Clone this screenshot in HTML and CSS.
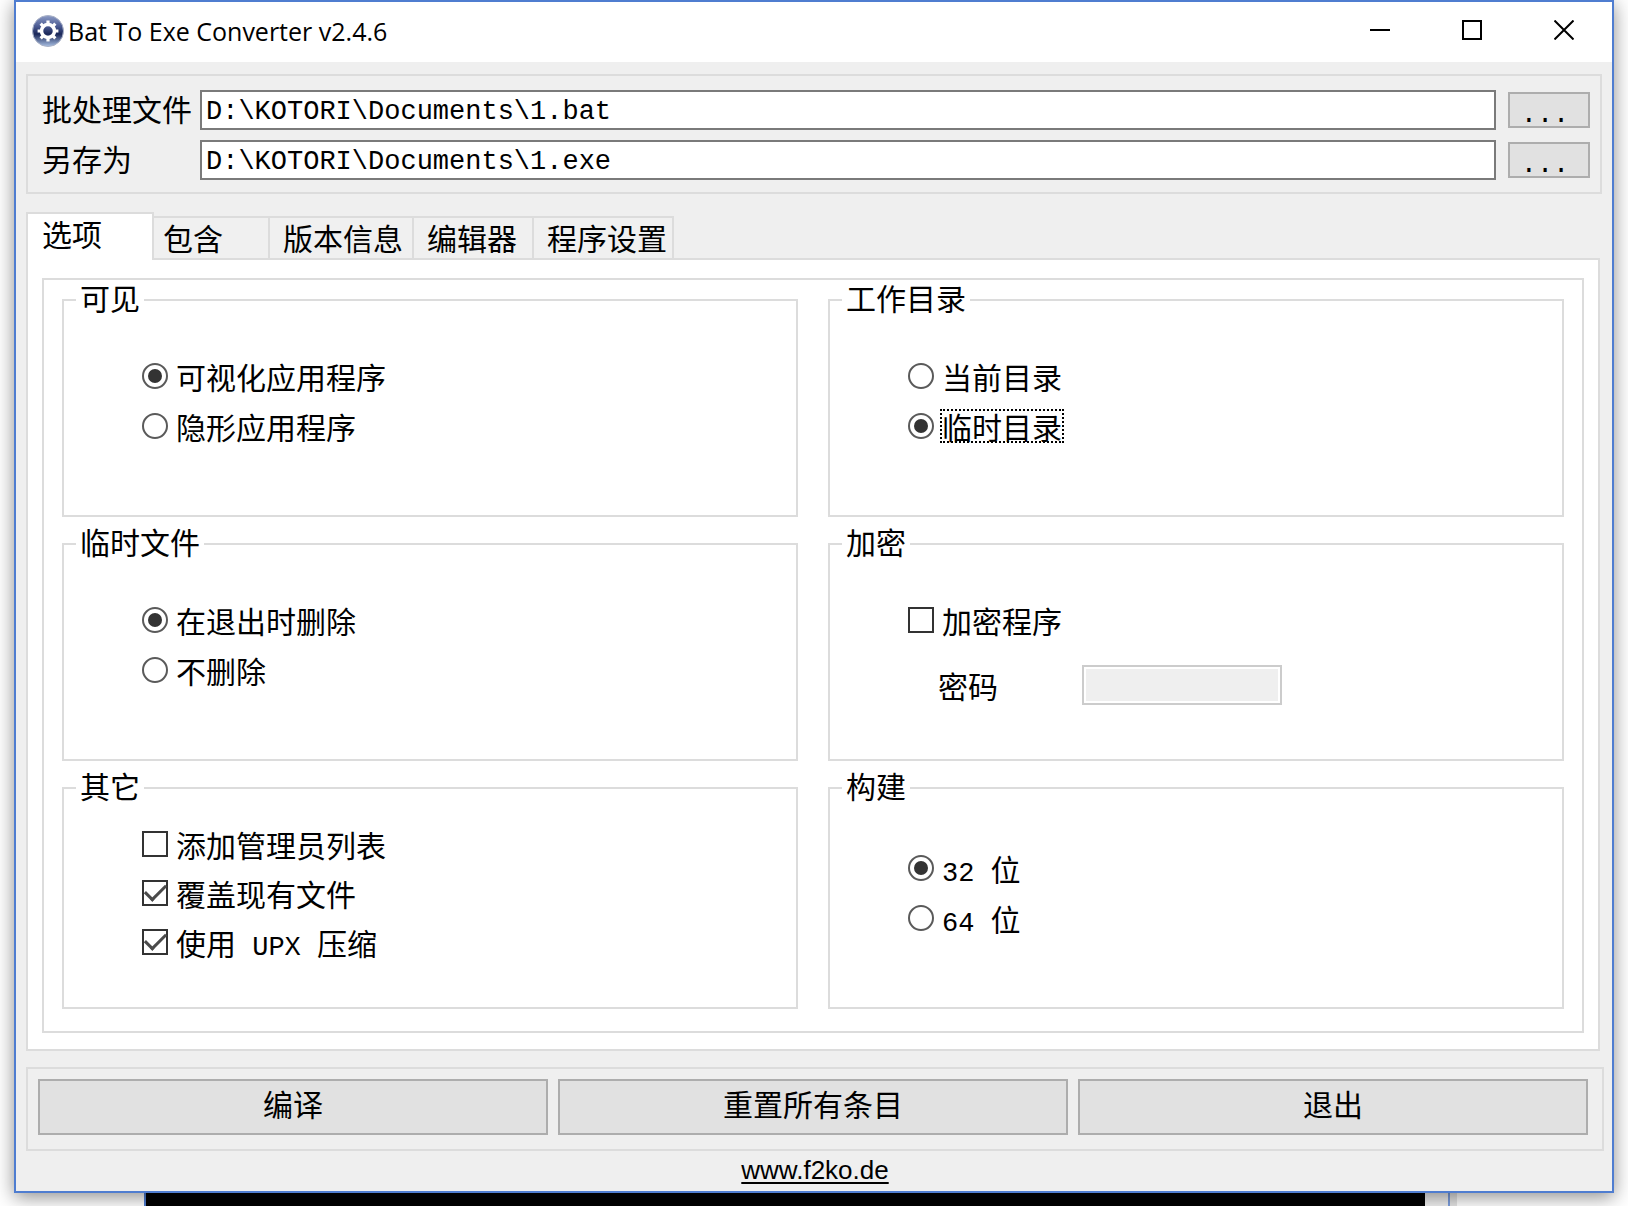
FILE: index.html
```html
<!DOCTYPE html>
<html lang="zh-CN">
<head>
<meta charset="utf-8">
<title>Bat To Exe Converter v2.4.6</title>
<link rel="stylesheet" href="styles.css">
</head>
<body>
<main class="window">
  <header class="titlebar">
    <svg class="app-icon" viewBox="0 0 32 32" aria-hidden="true">
      <defs>
        <linearGradient id="ball" x1="0" y1="0" x2="0" y2="1">
          <stop offset="0" stop-color="#8d9cc6"/>
          <stop offset=".35" stop-color="#4a5a92"/>
          <stop offset=".6" stop-color="#1a2758"/>
          <stop offset="1" stop-color="#a9c0e4"/>
        </linearGradient>
      </defs>
      <circle cx="16" cy="16" r="15.5" fill="url(#ball)" stroke="#a9b1c6" stroke-width="1"/>
      <circle cx="16" cy="16" r="6.5" fill="none" stroke="#fff" stroke-width="3.500"/>
      <path d="M16 5.600V9M16 23v3.400M5.600 16H9M23 16h3.400M8.650 8.650l2.400 2.400M20.950 20.950l2.400 2.400M8.650 23.350l2.400-2.400M20.950 11.050l2.400-2.400" stroke="#fff" stroke-width="3.200" fill="none"/>
    </svg>
    <h1 class="title">Bat To Exe Converter v2.4.6</h1>
    <button class="caption-button" type="button" aria-label="Minimize"><svg viewBox="0 0 20 20"><path d="M0 10h20"/></svg></button>
    <button class="caption-button" type="button" aria-label="Maximize"><svg viewBox="0 0 20 20"><path d="M1 1h18v18H1z"/></svg></button>
    <button class="caption-button" type="button" aria-label="Close"><svg viewBox="0 0 20 20"><path d="M.5.5l19 19M19.500.5l-19 19"/></svg></button>
  </header>

  <form class="client">
    <section class="frame files">
      <label for="source">批处理文件</label>
      <input class="textbox" id="source" type="text" value="D:\KOTORI\Documents\1.bat">
      <button class="button browse" type="button">...</button>
      <label for="target">另存为</label>
      <input class="textbox" id="target" type="text" value="D:\KOTORI\Documents\1.exe">
      <button class="button browse" type="button">...</button>
    </section>

    <nav class="tabs" role="tablist">
      <button class="tab tab-active" type="button" role="tab" aria-selected="true">选项</button>
      <button class="tab tab-short" type="button" role="tab">包含</button>
      <button class="tab tab-wide" type="button" role="tab">版本信息</button>
      <button class="tab" type="button" role="tab">编辑器</button>
      <button class="tab" type="button" role="tab">程序设置</button>
    </nav>

    <section class="panel" role="tabpanel">
      <div class="frame groups">
        <fieldset class="group">
          <legend>可见</legend>
          <label class="option"><input type="radio" name="visible" checked><span>可视化应用程序</span></label>
          <label class="option"><input type="radio" name="visible"><span>隐形应用程序</span></label>
        </fieldset>
        <fieldset class="group">
          <legend>工作目录</legend>
          <label class="option"><input type="radio" name="workdir"><span>当前目录</span></label>
          <label class="option"><input type="radio" name="workdir" checked><span class="focused">临时目录</span></label>
        </fieldset>
        <fieldset class="group">
          <legend>临时文件</legend>
          <label class="option"><input type="radio" name="temp" checked><span>在退出时删除</span></label>
          <label class="option"><input type="radio" name="temp"><span>不删除</span></label>
        </fieldset>
        <fieldset class="group">
          <legend>加密</legend>
          <label class="option"><input type="checkbox" name="encrypt"><span>加密程序</span></label>
          <div class="password-row">
            <label for="password">密码</label>
            <input class="textbox password" id="password" type="password" disabled>
          </div>
        </fieldset>
        <fieldset class="group group-dense">
          <legend>其它</legend>
          <label class="option"><input type="checkbox" name="manifest"><span>添加管理员列表</span></label>
          <label class="option"><input type="checkbox" name="overwrite" checked><span>覆盖现有文件</span></label>
          <label class="option"><input type="checkbox" name="upx" checked><span>使用<span class="latin"> UPX </span>压缩</span></label>
        </fieldset>
        <fieldset class="group group-build">
          <legend>构建</legend>
          <label class="option"><input type="radio" name="build" checked><span><span class="latin">32 </span>位</span></label>
          <label class="option"><input type="radio" name="build"><span><span class="latin">64 </span>位</span></label>
        </fieldset>
      </div>
    </section>

    <section class="frame actions">
      <button class="button" type="button">编译</button>
      <button class="button" type="button">重置所有条目</button>
      <button class="button" type="button">退出</button>
    </section>
    <footer class="footer"><a href="http://www.f2ko.de">www.f2ko.de</a></footer>
  </form>
</main>
<div class="backdrop" aria-hidden="true">
  <div class="console"></div>
  <div class="console-scrollbar"></div>
  <div class="console-edge"></div>
</div>
</body>
</html>
```
FILE: styles.css
```css
* {
  box-sizing: border-box;
}

body {
  margin: 0;
  min-height: 100vh;
  display: flex;
  flex-direction: column;
  overflow-x: hidden;
  background: #fff;
  color: #000;
  font-family: "Noto Sans CJK SC", sans-serif;
  font-size: 30px;
  line-height: 30px;
}

button,
input {
  margin: 0;
  font: inherit;
  color: inherit;
}

.window {
  position: relative;
  z-index: 1;
  margin: 0 14px;
  border: 2px solid #4f7dd0;
  background: #efefef;
  box-shadow: 0 4px 18px rgba(0, 0, 0, 0.45);
}

/* Title bar */

.titlebar {
  display: flex;
  align-items: center;
  height: 60px;
  padding: 0 2px 2px 16px;
  background: #fff;
}

.app-icon {
  width: 32px;
  height: 32px;
}

.title {
  flex: 1;
  margin: 0 0 0 4px;
  font-family: "Open Sans", sans-serif;
  font-size: 25px;
  font-weight: 400;
}

.caption-button {
  display: flex;
  align-items: center;
  justify-content: center;
  width: 92px;
  height: 56px;
  padding: 0 0 2px;
  border: 0;
  background: none;
}

.caption-button svg {
  width: 20px;
  height: 20px;
  fill: none;
  stroke: #000;
  stroke-width: 2;
}

/* Shared controls */

.client {
  padding: 12px 8px 0 10px;
}

.frame {
  border: 2px solid #dcdcdc;
}

.button {
  padding: 0;
  border: 2px solid #adadad;
  background: #e1e1e1;
}

.textbox {
  width: 100%;
  height: 40px;
  padding: 4px 4px 0;
  border: 2px solid #7a7a7a;
  border-radius: 0;
  background: #fff;
  font-family: "Liberation Mono", monospace;
  font-size: 27px;
}

.latin {
  font-family: "Liberation Mono", monospace;
  font-size: 27px;
  line-height: 1px;
  white-space: pre;
}

/* File names */

.files {
  display: grid;
  grid-template-columns: 158px 1fr 82px;
  row-gap: 10px;
  align-items: center;
  margin-right: 2px;
  padding: 14px 10px 12px 14px;
}

.files label {
  padding-bottom: 4px;
}

.browse {
  height: 36px;
  padding: 6px 8px 0 0;
  font-family: "Liberation Mono", monospace;
  font-size: 27px;
}

.files .textbox {
  width: calc(100% - 12px);
}

/* Tabs */

.tabs {
  display: flex;
  align-items: flex-end;
  margin-top: 18px;
}

.tab {
  min-width: 120px;
  height: 42px;
  padding: 0 5px 2px 13px;
  border: 2px solid #dcdcdc;
  border-width: 2px 2px 0 0;
  background: #f0f0f0;
  text-align: left;
}

.tab-wide {
  width: 144px;
}

.tab-short {
  width: 116px;
  min-width: 0;
  padding-left: 9px;
}

.tab-active {
  position: relative;
  width: 128px;
  height: 48px;
  margin-bottom: -2px;
  padding: 0 14px 8px;
  border-width: 2px 2px 0;
  background: #fff;
}

.panel {
  margin-right: 4px;
  padding: 18px 14px 16px;
  border: 2px solid #dcdcdc;
  background: #fff;
}

/* Option groups */

.groups {
  display: grid;
  grid-template-columns: 1fr 1fr;
  gap: 11px 30px;
  padding: 4px 18px 22px;
}

.group {
  display: flex;
  flex-direction: column;
  gap: 20px;
  min-width: 0;
  min-height: 233px;
  margin: 0;
  padding: 45px 12px 0 78px;
  border: 2px solid #dcdcdc;
}

.group legend {
  margin-left: -66px;
  padding: 0 4px 6px;
  line-height: 26px;
}

.group-dense {
  gap: 19px;
  min-height: 237px;
  padding-top: 25px;
}

.group-build {
  padding-top: 49px;
}

.option {
  display: flex;
  align-items: center;
  gap: 8px;
  height: 30px;
}

.option input {
  appearance: none;
  display: grid;
  place-items: center;
  width: 26px;
  height: 26px;
  border: 2px solid #333;
  background: #fff;
}

.option input[type="radio"] {
  border-color: #5a5a5a;
  border-radius: 50%;
}

.option input[type="radio"]:checked::before {
  content: "";
  width: 14px;
  height: 14px;
  border-radius: 50%;
  background: #333;
}

.option input[type="checkbox"]:checked::before {
  content: "";
  width: 18px;
  height: 9px;
  margin-bottom: 6px;
  border: solid #4a4a4a;
  border-width: 0 0 3px 3px;
  transform: rotate(-45deg);
}

.focused {
  outline: 2px dotted #000;
}

.password-row {
  display: grid;
  grid-template-columns: 144px 200px;
  align-items: center;
  margin-top: 10px;
  padding-left: 30px;
}

.password {
  border-color: #ccc;
  background: #efefef;
  box-shadow: inset 0 0 0 2px #fff;
}

/* Bottom bar */

.actions {
  display: grid;
  grid-template-columns: repeat(3, 1fr);
  gap: 10px;
  margin-top: 16px;
  padding: 10px 14px 14px 10px;
}

.actions .button {
  height: 56px;
  padding-bottom: 8px;
}

.footer {
  height: 40px;
  padding-top: 4px;
  text-align: center;
  font-family: "Liberation Sans", sans-serif;
  font-size: 26px;
}

.footer a {
  color: inherit;
  text-decoration-thickness: 2px;
  text-underline-offset: 3px;
}

/* Console window that shows below */

.backdrop {
  display: flex;
  flex: 1;
  margin: 0 171px 0 144px;
}

.console {
  flex: 1;
  border-left: 2px solid #4f7dd0;
  background: #000;
}

.console-scrollbar {
  width: 25px;
  border-right: 2px solid #7c9ede;
  background: #f0f0f0;
}

.console-edge {
  width: 7px;
  background: #e4e4e4;
}
```
